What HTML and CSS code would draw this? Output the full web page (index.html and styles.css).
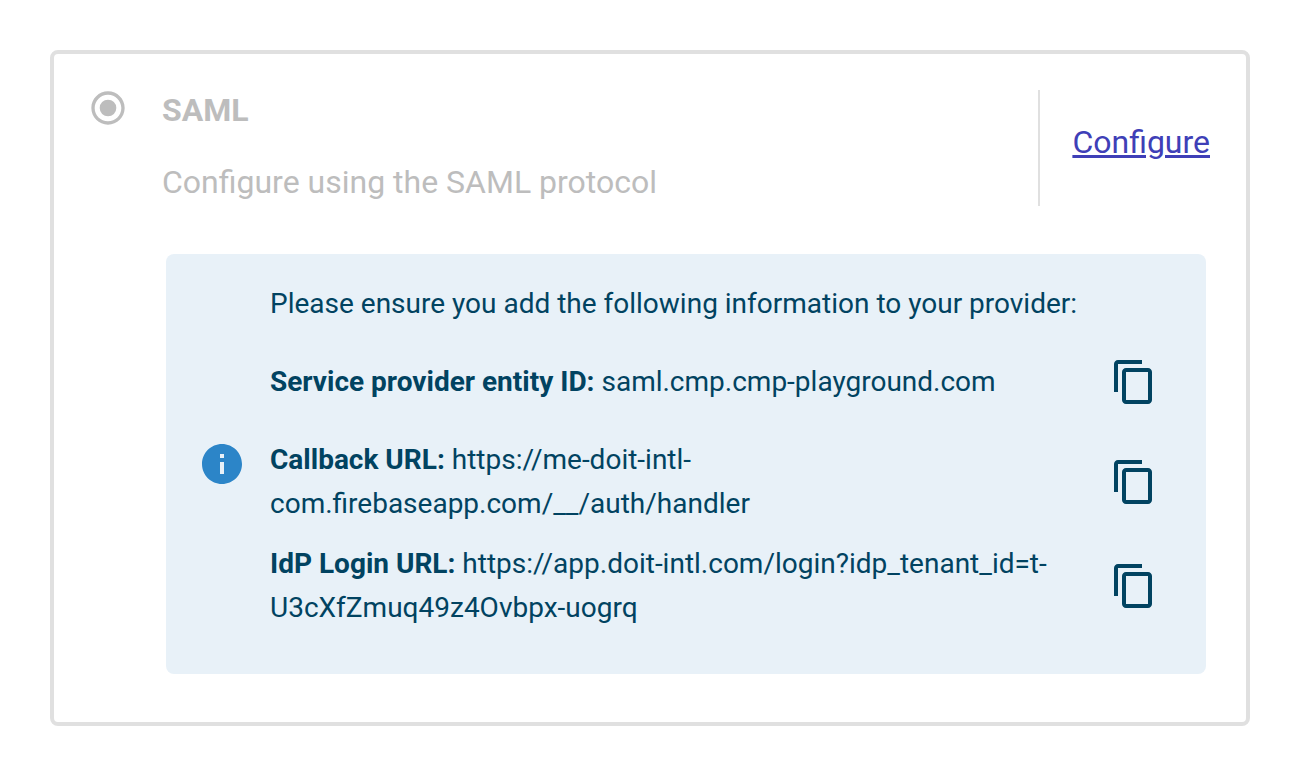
FILE: index.html
```html
<!DOCTYPE html>
<html lang="en">
<head>
<meta charset="utf-8">
<meta name="viewport" content="width=device-width, initial-scale=1">
<title>SAML</title>
<link rel="stylesheet" href="styles.css">
</head>
<body>
<svg class="sprite" aria-hidden="true">
  <symbol id="copy" viewBox="0 0 24 24"><path d="M16 1H4c-1.100 0-2 .9-2 2v14h2V3h12V1zm3 4H8c-1.100 0-2 .9-2 2v14c0 1.100.9 2 2 2h11c1.100 0 2-.9 2-2V7c0-1.100-.9-2-2-2zm0 16H8V7h11v14z"/></symbol>
</svg>
<main class="card">
  <header class="header">
    <span class="radio">
      <input class="radio-input" type="radio" id="saml" name="provider" checked disabled>
      <svg class="radio-mark" viewBox="0 0 24 24" aria-hidden="true"><path d="M12 2C6.480 2 2 6.480 2 12s4.480 10 10 10 10-4.480 10-10S17.520 2 12 2zm0 18c-4.420 0-8-3.580-8-8s3.580-8 8-8 8 3.580 8 8-3.580 8-8 8z"/><circle cx="12" cy="12" r="5"/></svg>
    </span>
    <div class="intro">
      <label class="title" for="saml">SAML</label>
      <p class="subtitle">Configure using the SAML protocol</p>
    </div>
    <div class="action"><a class="link" href="#configure">Configure</a></div>
  </header>
  <section class="alert">
    <svg class="icon info" viewBox="0 0 24 24" aria-hidden="true"><path d="M12 2C6.480 2 2 6.480 2 12s4.480 10 10 10 10-4.480 10-10S17.520 2 12 2zm1 15h-2v-6h2v6zm0-8h-2V7h2v2z"/></svg>
    <div class="details">
      <p class="lead">Please ensure you add the following information to your provider:</p>
      <div class="row">
        <p class="value"><strong>Service provider entity ID:</strong> saml.cmp.cmp-playground.com</p>
        <button class="copy" type="button" aria-label="Copy service provider entity ID"><svg class="icon" aria-hidden="true"><use href="#copy"/></svg></button>
      </div>
      <div class="row">
        <p class="value"><strong>Callback URL:</strong> https://me-doit-intl-com.firebaseapp.com/__/auth/handler</p>
        <button class="copy" type="button" aria-label="Copy callback URL"><svg class="icon" aria-hidden="true"><use href="#copy"/></svg></button>
      </div>
      <div class="row">
        <p class="value"><strong>IdP Login URL:</strong> https://app.doit-intl.com/login?idp_tenant_id=t-U3cXfZmuq49z4Ovbpx-uogrq</p>
        <button class="copy" type="button" aria-label="Copy IdP login URL"><svg class="icon" aria-hidden="true"><use href="#copy"/></svg></button>
      </div>
    </div>
  </section>
</main>
</body>
</html>
```
FILE: styles.css
```css
* { box-sizing: border-box; }
body {
  margin: 0;
  padding: 50px;
  background: #fff;
  font-family: Roboto, "Liberation Sans", sans-serif;
  font-size: 32px;
  line-height: 48px;
}
p { margin: 0; }
.sprite { display: none; }
.card {
  padding: 36px 36px 48px 34px;
  border: 4px solid #e0e0e0;
  border-radius: 8px;
}
.header {
  display: flex;
  gap: 34px;
  color: #bdbdbd;
}
.radio {
  display: grid;
  grid-template-rows: 36px;
  align-items: center;
  flex: none;
  width: 40px;
}
.radio-input,
.radio-mark {
  grid-area: 1 / 1;
  width: 40px;
  height: 40px;
  margin: 0;
}
.radio-input { opacity: 0; }
.radio-mark {
  fill: currentColor;
  pointer-events: none;
}
.intro { flex: 1; }
.title {
  display: block;
  margin-bottom: 28px;
  font-weight: 700;
  line-height: 40px;
}
.action {
  display: flex;
  align-items: center;
  padding: 0 0 12px 32px;
  border-left: 2px solid #e0e0e0;
}
.link {
  color: #3f3fb7;
  text-decoration-thickness: 3px;
  text-underline-offset: 2px;
}
.alert {
  display: flex;
  align-items: center;
  gap: 24px;
  margin: 48px 4px 0 78px;
  padding: 28px 24px 36px 32px;
  border-radius: 8px;
  background: #e8f1f8;
  color: #014361;
  font-size: 28px;
  line-height: 44px;
}
.icon {
  display: block;
  flex: none;
  width: 48px;
  height: 48px;
  fill: currentColor;
}
.info {
  margin-top: 8px;
  color: #2c85c8;
}
.details { flex: 1; min-width: 0; }
.lead { margin-bottom: 8px; }
.row {
  display: flex;
  align-items: center;
  min-height: 96px;
}
.value {
  flex: 1;
  min-width: 0;
  padding: 8px 0;
}
.copy {
  padding: 24px;
  border: 0;
  border-radius: 50%;
  background: none;
  color: inherit;
  cursor: pointer;
}
```
